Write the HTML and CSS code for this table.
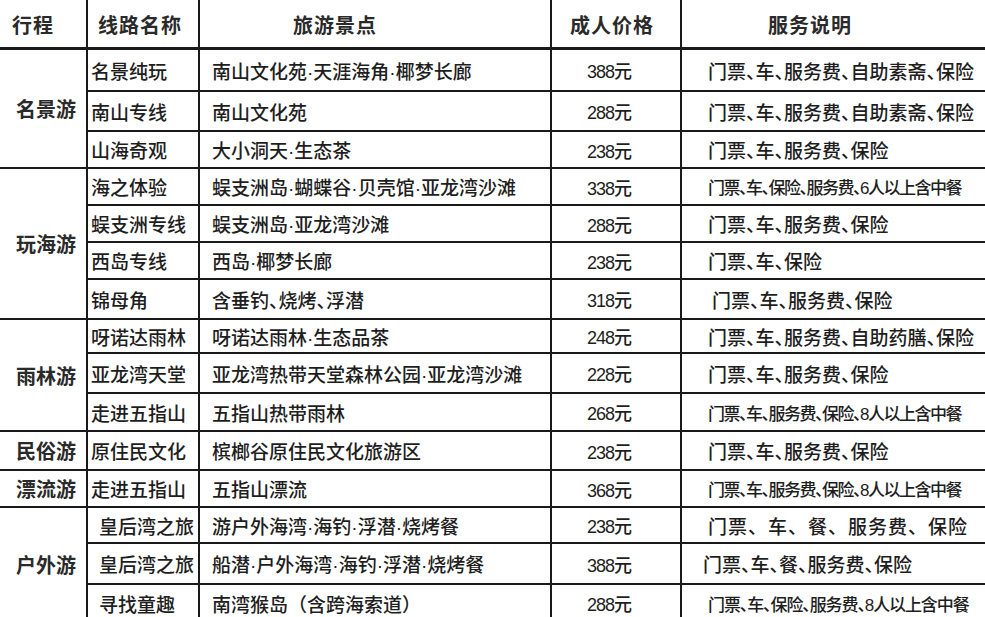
FILE: index.html
```html
<!DOCTYPE html>
<html lang="zh-CN">
<head>
<meta charset="utf-8">
<title>线路价格表</title>
<link rel="stylesheet" href="styles.css">
</head>
<body>
<div class="sheet">
  <div class="cell head h1">行程</div>
  <div class="cell head h2">线路名称</div>
  <div class="cell head h3">旅游景点</div>
  <div class="cell head h4">成人价格</div>
  <div class="cell head h5">服务说明</div>

  <div class="cell group g1">名景游</div>
  <div class="cell group g2">玩海游</div>
  <div class="cell group g3">雨林游</div>
  <div class="cell group g4">民俗游</div>
  <div class="cell group g5">漂流游</div>
  <div class="cell group g6">户外游</div>

  <div class="cell name">名景纯玩</div>
  <div class="cell spot">南山文化苑·天涯海角·椰梦长廊</div>
  <div class="cell price">388元</div>
  <div class="cell note">门票、车、服务费、自助素斋、保险</div>

  <div class="cell name">南山专线</div>
  <div class="cell spot">南山文化苑</div>
  <div class="cell price">288元</div>
  <div class="cell note">门票、车、服务费、自助素斋、保险</div>

  <div class="cell name">山海奇观</div>
  <div class="cell spot">大小洞天·生态茶</div>
  <div class="cell price">238元</div>
  <div class="cell note">门票、车、服务费、保险</div>

  <div class="cell name">海之体验</div>
  <div class="cell spot">蜈支洲岛·蝴蝶谷·贝壳馆·亚龙湾沙滩</div>
  <div class="cell price">338元</div>
  <div class="cell note tight">门票、车、保险、服务费、6人以上含中餐</div>

  <div class="cell name">蜈支洲专线</div>
  <div class="cell spot">蜈支洲岛·亚龙湾沙滩</div>
  <div class="cell price">288元</div>
  <div class="cell note">门票、车、服务费、保险</div>

  <div class="cell name">西岛专线</div>
  <div class="cell spot">西岛·椰梦长廊</div>
  <div class="cell price">238元</div>
  <div class="cell note">门票、车、保险</div>

  <div class="cell name">锦母角</div>
  <div class="cell spot half">含垂钓、烧烤、浮潜</div>
  <div class="cell price">318元</div>
  <div class="cell note shift">门票、车、服务费、保险</div>

  <div class="cell name">呀诺达雨林</div>
  <div class="cell spot">呀诺达雨林·生态品茶</div>
  <div class="cell price">248元</div>
  <div class="cell note">门票、车、服务费、自助药膳、保险</div>

  <div class="cell name">亚龙湾天堂</div>
  <div class="cell spot">亚龙湾热带天堂森林公园·亚龙湾沙滩</div>
  <div class="cell price">228元</div>
  <div class="cell note">门票、车、服务费、保险</div>

  <div class="cell name">走进五指山</div>
  <div class="cell spot">五指山热带雨林</div>
  <div class="cell price">268元</div>
  <div class="cell note tight">门票、车、服务费、保险、8人以上含中餐</div>

  <div class="cell name">原住民文化</div>
  <div class="cell spot">槟榔谷原住民文化旅游区</div>
  <div class="cell price">238元</div>
  <div class="cell note">门票、车、服务费、保险</div>

  <div class="cell name">走进五指山</div>
  <div class="cell spot">五指山漂流</div>
  <div class="cell price">368元</div>
  <div class="cell note tight">门票、车、服务费、保险、8人以上含中餐</div>

  <div class="cell name indent">皇后湾之旅</div>
  <div class="cell spot">游户外海湾·海钓·浮潜·烧烤餐</div>
  <div class="cell price">238元</div>
  <div class="cell note wide">门票、车、餐、服务费、保险</div>

  <div class="cell name indent">皇后湾之旅</div>
  <div class="cell spot">船潜·户外海湾·海钓·浮潜·烧烤餐</div>
  <div class="cell price">388元</div>
  <div class="cell note left">门票、车、餐、服务费、保险</div>

  <div class="cell name indent">寻找童趣</div>
  <div class="cell spot">南湾猴岛（含跨海索道）</div>
  <div class="cell price">288元</div>
  <div class="cell note tight loose">门票、车、保险、服务费、8人以上含中餐</div>
</div>
</body>
</html>
```

FILE: styles.css
```css
html, body {
  margin: 0;
  padding: 0;
  background: #ffffff;
}

body {
  font-family: "Liberation Sans", "Noto Sans CJK SC", sans-serif;
  color: #1e1e1e;
  overflow: hidden;
}

.sheet {
  display: grid;
  width: 985px;
  grid-template-columns: 86px 110px 350px 128px 303px;
  grid-template-rows: 48px 40px 38px 35px 35px 35px 35px 38px 32px 38px 36px 37px 35px 34px 39px 36px;
  gap: 2px;
  background: #1a1a1a;
}

.cell {
  background: #ffffff;
  display: flex;
  align-items: center;
  font-size: 19px;
  font-weight: 500;
  white-space: nowrap;
  overflow: hidden;
}

.head {
  font-size: 20px;
  font-weight: 700;
  letter-spacing: 1px;
  box-shadow: inset 0 -1px 0 #1a1a1a;
  color: #2a2a2a;
}
.h1 { padding-left: 12px; }
.h2 { padding-left: 10px; }
.h3 { padding-left: 93px; }
.h4 { padding-left: 18px; }
.h5 { padding-left: 86px; }

.group {
  grid-column: 1;
  font-size: 20px;
  font-weight: 700;
  padding-left: 16px;
  color: #2a2a2a;
}
.g1 { grid-row: 2 / 5; }
.g2 { grid-row: 5 / 9; }
.g3 { grid-row: 9 / 12; }
.g4 { grid-row: 12 / 13; }
.g5 { grid-row: 13 / 14; }
.g6 { grid-row: 14 / 17; }

.name {
  padding-left: 3px;
}
.name.indent {
  padding-left: 11px;
}

.spot {
  padding-left: 12px;
}
.spot.half {
  font-feature-settings: "halt";
}

.price {
  justify-content: center;
  padding-right: 14px;
  font-size: 18px;
  letter-spacing: -1px;
}

.note {
  padding-left: 26px;
  font-feature-settings: "halt";
}
.note.shift { padding-left: 30px; }
.note.left { padding-left: 21px; }
.note.wide {
  font-feature-settings: normal;
  letter-spacing: 1px;
}
.note.tight {
  font-size: 17px;
  letter-spacing: -1.5px;
}
.note.loose {
  letter-spacing: -1.1px;
}
```
